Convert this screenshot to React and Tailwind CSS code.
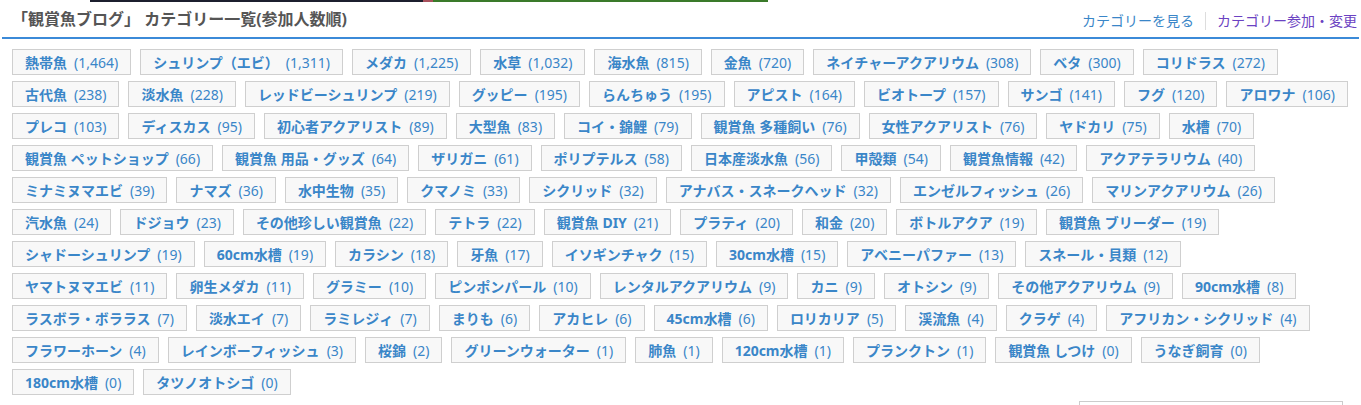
const rows = [
  [["熱帯魚", "1,464"], ["シュリンプ（エビ）", "1,311"], ["メダカ", "1,225"], ["水草", "1,032"], ["海水魚", "815"], ["金魚", "720"], ["ネイチャーアクアリウム", "308"], ["ベタ", "300"], ["コリドラス", "272"]],
  [["古代魚", "238"], ["淡水魚", "228"], ["レッドビーシュリンプ", "219"], ["グッピー", "195"], ["らんちゅう", "195"], ["アピスト", "164"], ["ビオトープ", "157"], ["サンゴ", "141"], ["フグ", "120"], ["アロワナ", "106"]],
  [["プレコ", "103"], ["ディスカス", "95"], ["初心者アクアリスト", "89"], ["大型魚", "83"], ["コイ・錦鯉", "79"], ["観賞魚 多種飼い", "76"], ["女性アクアリスト", "76"], ["ヤドカリ", "75"], ["水槽", "70"]],
  [["観賞魚 ペットショップ", "66"], ["観賞魚 用品・グッズ", "64"], ["ザリガニ", "61"], ["ポリプテルス", "58"], ["日本産淡水魚", "56"], ["甲殻類", "54"], ["観賞魚情報", "42"], ["アクアテラリウム", "40"]],
  [["ミナミヌマエビ", "39"], ["ナマズ", "36"], ["水中生物", "35"], ["クマノミ", "33"], ["シクリッド", "32"], ["アナバス・スネークヘッド", "32"], ["エンゼルフィッシュ", "26"], ["マリンアクアリウム", "26"]],
  [["汽水魚", "24"], ["ドジョウ", "23"], ["その他珍しい観賞魚", "22"], ["テトラ", "22"], ["観賞魚 DIY", "21"], ["プラティ", "20"], ["和金", "20"], ["ボトルアクア", "19"], ["観賞魚 ブリーダー", "19"]],
  [["シャドーシュリンプ", "19"], ["60cm水槽", "19"], ["カラシン", "18"], ["牙魚", "17"], ["イソギンチャク", "15"], ["30cm水槽", "15"], ["アベニーパファー", "13"], ["スネール・貝類", "12"]],
  [["ヤマトヌマエビ", "11"], ["卵生メダカ", "11"], ["グラミー", "10"], ["ピンポンパール", "10"], ["レンタルアクアリウム", "9"], ["カニ", "9"], ["オトシン", "9"], ["その他アクアリウム", "9"], ["90cm水槽", "8"]],
  [["ラスボラ・ボララス", "7"], ["淡水エイ", "7"], ["ラミレジィ", "7"], ["まりも", "6"], ["アカヒレ", "6"], ["45cm水槽", "6"], ["ロリカリア", "5"], ["渓流魚", "4"], ["クラゲ", "4"], ["アフリカン・シクリッド", "4"]],
  [["フラワーホーン", "4"], ["レインボーフィッシュ", "3"], ["桜錦", "2"], ["グリーンウォーター", "1"], ["肺魚", "1"], ["120cm水槽", "1"], ["プランクトン", "1"], ["観賞魚 しつけ", "0"], ["うなぎ飼育", "0"]],
  [["180cm水槽", "0"], ["タツノオトシゴ", "0"]],
];

function Tag({ name, count }) {
  return (
    <a href="#" className="flex items-center h-[26px] px-[12px] border border-[#cfcfcf] bg-[#f8f8f8] text-[14px] text-[#3a86c8] whitespace-nowrap">
      <span className="font-bold">{name}</span>
      <span className="ml-[7px]">({count})</span>
    </a>
  );
}

export default function App() {
  return (
    <div className="w-[1361px] h-[405px] overflow-hidden bg-white font-['Noto_Sans','Noto_Sans_CJK_JP',sans-serif]">
      {/* banner strip peeking in from above */}
      <div className="flex h-[2px]">
        <div className="w-[90px]" />
        <div className="w-[333px] bg-[#1c1f2e]" />
        <div className="w-[10px] bg-[#a8505c]" />
        <div className="w-[335px] bg-[#3a7a2a]" />
      </div>

      <div className="mx-[2px] flex items-end justify-between border-b-2 border-[#3b8ad8] h-[37px] pb-[6px]">
        <h1 className="pl-[10px] text-[16px] font-bold text-[#555]">「観賞魚ブログ」 カテゴリー一覧(参加人数順)</h1>
        <div className="flex items-center text-[14px] pr-[2px]">
          <a href="#" className="text-[#3a86c8]">カテゴリーを見る</a>
          <span className="mx-[11px] w-px h-[18px] bg-[#ddd]" />
          <a href="#" className="text-[#6b42c2]">カテゴリー参加・変更</a>
        </div>
      </div>

      <div className="mt-[10px] pl-[12px] flex flex-col gap-[6px]">
        {rows.map((row, i) => (
          <div key={i} className="flex gap-[9px]">
            {row.map(([name, count]) => (
              <Tag key={name} name={name} count={count} />
            ))}
          </div>
        ))}
      </div>

      <div className="flex justify-end mt-[6px] pr-[18px]">
        <div className="w-[264px] h-[30px] border border-[#ccc]" />
      </div>
    </div>
  );
}
